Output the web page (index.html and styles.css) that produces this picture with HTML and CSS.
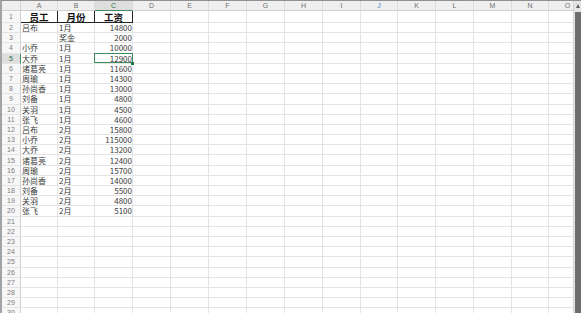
FILE: index.html
```html
<!DOCTYPE html>
<html lang="zh-CN">
<head>
  <meta charset="UTF-8" />
  <meta name="viewport" content="width=device-width, initial-scale=1.0" />
  <title>工资表</title>
  <link rel="stylesheet" href="styles.css">
</head>
<body>
  <div class="excel">
    <div class="sheet" id="sheet"></div>
    <div class="scrollbar">
      <span class="arrow"></span>
      <div class="thumb"></div>
    </div>
  </div>

  <script>
    // 表格数据
    const data = [
      ['员工', '月份', '工资'],
      ['吕布', '1月', 14800],
      ['', '奖金', 2000],
      ['小乔', '1月', 10000],
      ['大乔', '1月', 12900],
      ['诸葛亮', '1月', 11600],
      ['周瑜', '1月', 14300],
      ['孙尚香', '1月', 13000],
      ['刘备', '1月', 4800],
      ['关羽', '1月', 4500],
      ['张飞', '1月', 4600],
      ['吕布', '2月', 15800],
      ['小乔', '2月', 115000],
      ['大乔', '2月', 13200],
      ['诸葛亮', '2月', 12400],
      ['周瑜', '2月', 15700],
      ['孙尚香', '2月', 14000],
      ['刘备', '2月', 5500],
      ['关羽', '2月', 4800],
      ['张飞', '2月', 5100]
    ];
    const cols = 'ABCDEFGHIJKLMNO'.split('');
    const sheet = document.getElementById('sheet');

    function add(cls, text) {
      const d = document.createElement('div');
      d.className = cls;
      if (text !== undefined) d.textContent = text;
      sheet.appendChild(d);
    }

    // 列标题
    add('cell corner');
    cols.forEach(c => add('cell col-head' + (c === 'C' ? ' picked' : '') + (c === 'J' ? ' tint-j' : ''), c));

    // 行
    for (let r = 1; r <= 30; r++) {
      add('cell row-head' + (r === 5 ? ' picked' : ''), r);
      const row = data[r - 1] || [];
      cols.forEach((c, i) => {
        let cls = 'cell';
        if (r === 1 && i < 3) cls += ' title';
        else if (i === 2 && row[2] !== undefined) cls += ' num';
        if (r === 5 && i === 2) cls += ' active';
        add(cls, row[i]);
      });
    }
  </script>
</body>
</html>
```

FILE: styles.css
```css
* { margin: 0; padding: 0; box-sizing: border-box; }
html, body { height: 100%; overflow: hidden; background: #fff; }
body { font-family: "Noto Sans CJK SC", sans-serif; }

.excel {
  display: flex;
  height: 100%;
  border-top: 1px solid #8f8f8f;
  border-left: 2px solid #a3a3a3;
}

.sheet {
  flex: 1;
  overflow: hidden;
  display: grid;
  grid-template-columns: 19px 37px 37px 38px repeat(6, 38px) 37px repeat(3, 38px) 37px 38px;
  grid-template-rows: 10px 12px repeat(29, 10.2px);
}

.cell {
  border-right: 1px solid #e4e4e4;
  border-bottom: 1px solid #e4e4e4;
  font-size: 8px;
  line-height: 9px;
  color: #3a3a3a;
  padding: 0 1px;
  white-space: nowrap;
  overflow: hidden;
  display: flex;
  align-items: center;
}

.num { justify-content: flex-end; padding-right: 0; }

.corner {
  background: #efefef;
  border-right-color: #d4d4d4;
  border-bottom-color: #cfcfcf;
}

.col-head {
  background: #efefef;
  border-right-color: #dcdcdc;
  border-bottom-color: #cfcfcf;
  justify-content: center;
  font-family: "Liberation Sans", sans-serif;
  font-size: 7px;
  color: #707070;
}

.row-head {
  background: #f7f7f7;
  border-right-color: #d0d0d0;
  justify-content: center;
  font-family: "Liberation Sans", sans-serif;
  font-size: 7px;
  color: #7c7c7c;
}

.col-head.picked {
  background: #dedede;
  color: #217346;
  border-bottom: 1px solid #3d8b5c;
}

.row-head.picked {
  background: #dedede;
  color: #217346;
  border-right: 1px solid #3d8b5c;
}

.tint-j { color: #3f7fc8; }

.title {
  border-right-color: #222;
  border-bottom-color: #222;
  justify-content: center;
  font-size: 9.5px;
  line-height: 10px;
  font-weight: bold;
  color: #111;
}

.active { position: relative; overflow: visible; }

.active::after {
  content: "";
  position: absolute;
  top: -1px; left: -1px; right: -1px; bottom: 0;
  border: 1px solid #3d8b5c;
}

.active::before {
  content: "";
  position: absolute;
  right: -2px; bottom: -2px;
  width: 3px; height: 3px;
  background: #217346;
  z-index: 1;
}

.scrollbar {
  width: 8px;
  background: #e4e4e4;
  border-left: 1px solid #d4d4d4;
  display: flex;
  flex-direction: column;
  align-items: flex-end;
}

.arrow {
  margin: 3px 0 0 0;
  width: 0; height: 0;
  border-left: 2.5px solid transparent;
  border-right: 2.5px solid transparent;
  border-bottom: 4px solid #5e5e5e;
  align-self: center;
}

.thumb {
  flex: 1;
  width: 6px;
  margin-top: 4px;
  background: #6e6e6e;
}
```
